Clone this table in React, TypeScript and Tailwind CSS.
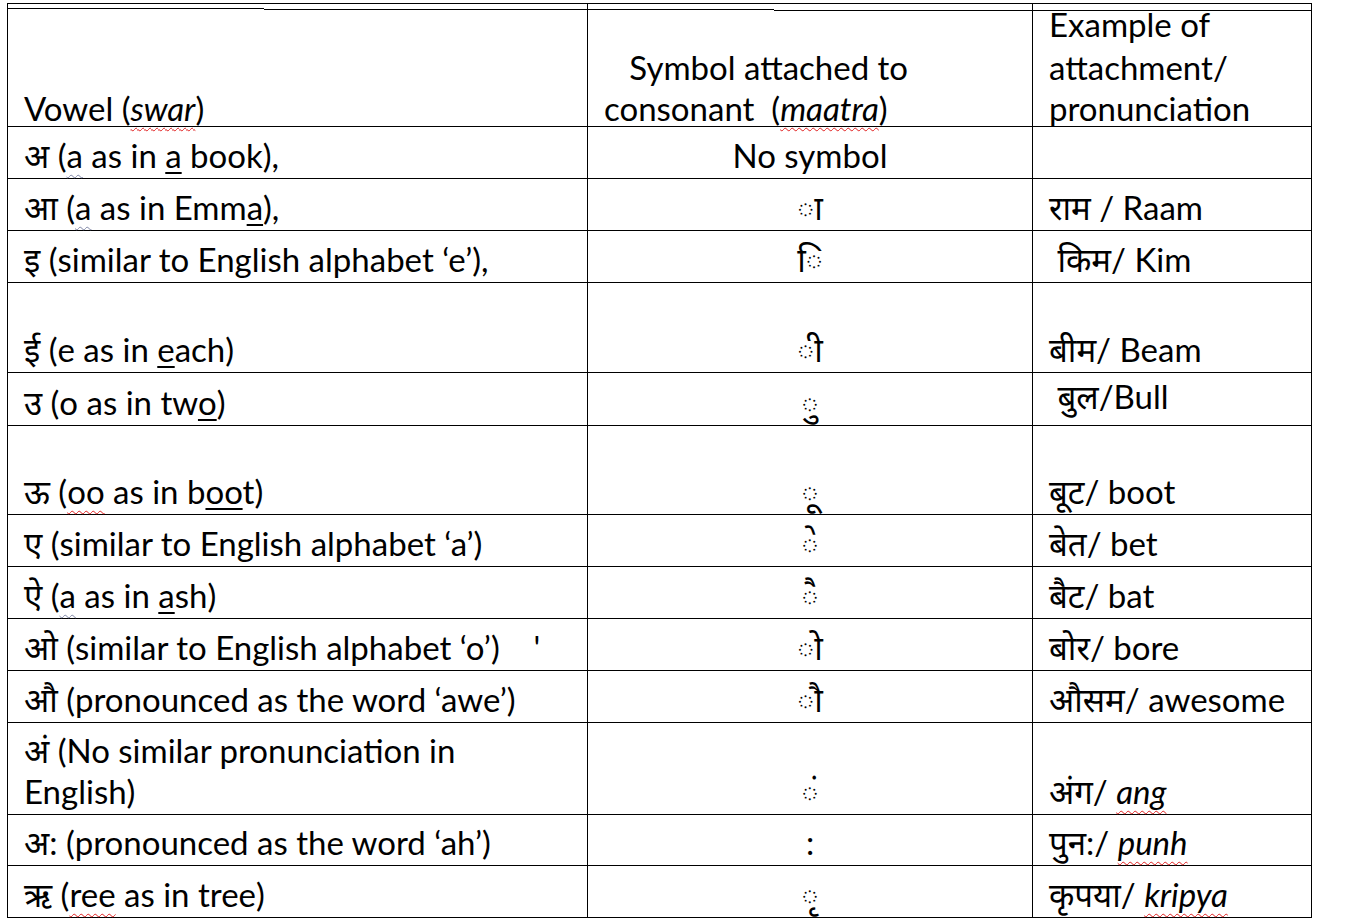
import React from "react";

const FONT =
  'Lato, "Noto Sans Devanagari", "Lohit Devanagari", "Mangal", "Noto Sans", "DejaVu Sans", sans-serif';

const U = ({ children }: { children: React.ReactNode }) => (
  <span className="underline decoration-black decoration-[2px] underline-offset-[4px]">{children}</span>
);

const W = ({ children, gray }: { children: React.ReactNode; gray?: boolean }) => (
  <span
    className={
      "underline decoration-wavy decoration-[1px] underline-offset-[6px] " +
      (gray ? "decoration-[#7f86a6]" : "decoration-[#e02020]")
    }
  >
    {children}
  </span>
);

type Row = {
  h: string;
  a: React.ReactNode;
  b: React.ReactNode;
  c: React.ReactNode;
  cClass?: string;
};

const rows: Row[] = [
  {
    h: "h-[52px]",
    a: (
      <>
        अ (<W gray>a</W> as in <U>a</U> book),
      </>
    ),
    b: "No symbol",
    c: "",
  },
  {
    h: "h-[52px]",
    a: (
      <>
        आ (<W gray>a</W> as in Emm<U>a</U>),
      </>
    ),
    b: "◌ा",
    c: "राम / Raam",
  },
  {
    h: "h-[52px]",
    a: "इ (similar to English alphabet ‘e’),",
    b: "◌ि",
    c: " किम/ Kim",
  },
  {
    h: "h-[90px]",
    a: (
      <>
        ई (e as in <U>e</U>ach)
      </>
    ),
    b: "◌ी",
    c: "बीम/ Beam",
  },
  {
    h: "h-[53px]",
    a: (
      <>
        उ (o as in tw<U>o</U>)
      </>
    ),
    b: "◌ु",
    c: " बुल/Bull",
    cClass: "pb-[8px]",
  },
  {
    h: "h-[89px]",
    a: (
      <>
        ऊ (<W>oo</W> as in b<U>oo</U>t)
      </>
    ),
    b: "◌ू",
    c: "बूट/ boot",
  },
  {
    h: "h-[52px]",
    a: "ए (similar to English alphabet ‘a’)",
    b: "◌े",
    c: "बेत/ bet",
  },
  {
    h: "h-[52px]",
    a: (
      <>
        ऐ (<W gray>a</W> as in <U>a</U>sh)
      </>
    ),
    b: "◌ै",
    c: "बैट/ bat",
  },
  {
    h: "h-[52px]",
    a: "ओ (similar to English alphabet ‘o’)    '",
    b: "◌ो",
    c: "बोर/ bore",
  },
  {
    h: "h-[52px]",
    a: "औ (pronounced as the word ‘awe’)",
    b: "◌ौ",
    c: "औसम/ awesome",
  },
  {
    h: "h-[92px]",
    a: (
      <>
        अं (No similar pronunciation in
        <br />
        English)
      </>
    ),
    b: "◌ं",
    c: (
      <>
        अंग/ <W>
          <i>ang</i>
        </W>
      </>
    ),
  },
  {
    h: "h-[51px]",
    a: "अ: (pronounced as the word ‘ah’)",
    b: ":",
    c: (
      <>
        पुन:/ <W>
          <i>punh</i>
        </W>
      </>
    ),
  },
  {
    h: "h-[52px]",
    a: (
      <>
        ऋ (<W>ree</W> as in tree)
      </>
    ),
    b: "◌ृ",
    c: (
      <>
        कृपया/ <W>
          <i>kripya</i>
        </W>
      </>
    ),
  },
];

const cellBase = "flex flex-col justify-end leading-[41px] whitespace-pre";

export default function App() {
  return (
    <div className="min-h-[920px] w-full bg-white text-black" style={{ fontFamily: FONT }}>
      <div className="pl-[7px] pt-[3px]">
        <div className="relative w-[1305px] border-l border-r border-t border-black text-[33px]">
          {/* second (stepped) top rule of the double border */}
          <div className="pointer-events-none absolute left-0 right-0 top-[4px] flex items-start">
            <div className="h-px w-[256px] bg-black" />
            <div className="mt-px h-px w-[510px] bg-black" />
            <div className="mt-[2px] h-px flex-1 bg-black" />
          </div>

          {/* header */}
          <div className="grid h-[123px] grid-cols-[580px_445px_278px] border-b border-black">
            <div className={cellBase + " border-r border-black pb-[4px] pl-[16px]"}>
              <div>
                Vowel (<W>
                  <i>swar</i>
                </W>)
              </div>
            </div>
            <div className={cellBase + " border-r border-black pb-[4px] pl-[16px]"}>
              <div>{"   Symbol attached to"}</div>
              <div>
                {"consonant  ("}
                <W>
                  <i>maatra</i>
                </W>
                {")"}
              </div>
            </div>
            <div className={cellBase + " pb-[4px] pl-[16px]"}>
              <div className="mb-[2px]">Example of</div>
              <div>attachment/</div>
              <div>pronunciation</div>
            </div>
          </div>

          {rows.map((r, i) => (
            <div
              key={i}
              className={"grid grid-cols-[580px_445px_278px] border-b border-black " + r.h}
            >
              <div className={cellBase + " border-r border-black pb-[2px] pl-[16px]"}>
                <div>{r.a}</div>
              </div>
              <div className={cellBase + " items-center border-r border-black pb-[2px]"}>
                <div>{r.b}</div>
              </div>
              <div className={cellBase + " pl-[16px] " + (r.cClass ?? "pb-[2px]")}>
                <div>{r.c}</div>
              </div>
            </div>
          ))}
        </div>
      </div>
    </div>
  );
}
